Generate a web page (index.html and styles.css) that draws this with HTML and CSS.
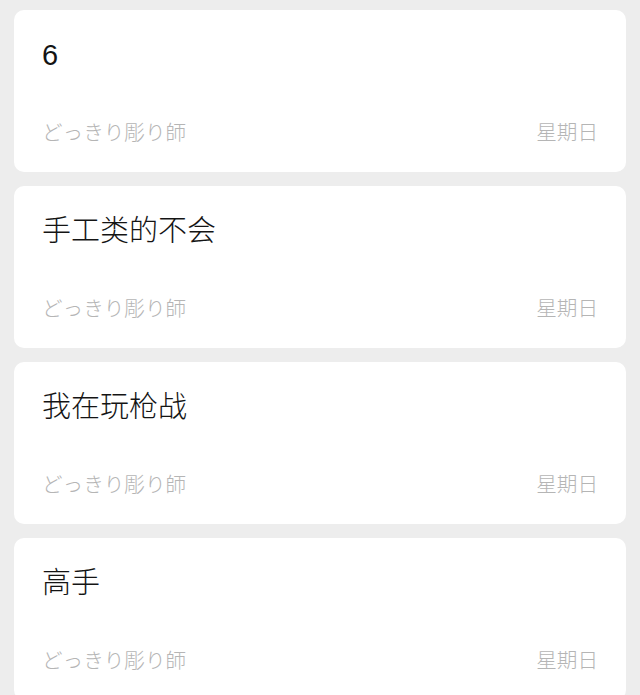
FILE: index.html
```html
<!DOCTYPE html>
<html lang="zh">
<head>
<meta charset="utf-8">
<link rel="stylesheet" href="styles.css">
</head>
<body>
<div class="list">
  <div class="card">
    <div class="title">6</div>
    <div class="meta"><span class="author">どっきり彫り師</span><span class="day">星期日</span></div>
  </div>
  <div class="card">
    <div class="title">手工类的不会</div>
    <div class="meta"><span class="author">どっきり彫り師</span><span class="day">星期日</span></div>
  </div>
  <div class="card">
    <div class="title">我在玩枪战</div>
    <div class="meta"><span class="author">どっきり彫り師</span><span class="day">星期日</span></div>
  </div>
  <div class="card">
    <div class="title">高手</div>
    <div class="meta"><span class="author">どっきり彫り師</span><span class="day">星期日</span></div>
  </div>
</div>
</body>
</html>
```
FILE: styles.css
```css
html, body {
  margin: 0;
  padding: 0;
  background: #ededed;
}
body {
  font-family: "Liberation Sans", "Noto Sans CJK SC", sans-serif;
}
.list {
  display: flex;
  flex-direction: column;
  gap: 14px;
  padding: 10px 14px;
}
.card {
  background: #ffffff;
  border-radius: 10px;
  height: 162px;
  box-sizing: border-box;
  padding: 25px 28px 25px 28px;
  display: flex;
  flex-direction: column;
  justify-content: space-between;
}
.title {
  font-size: 29px;
  line-height: 40px;
  font-weight: 300;
  color: #141414;
}
.meta {
  display: flex;
  justify-content: space-between;
  font-size: 20.6px;
  line-height: 28px;
  font-weight: 300;
  color: #b5b5b5;
}
```
